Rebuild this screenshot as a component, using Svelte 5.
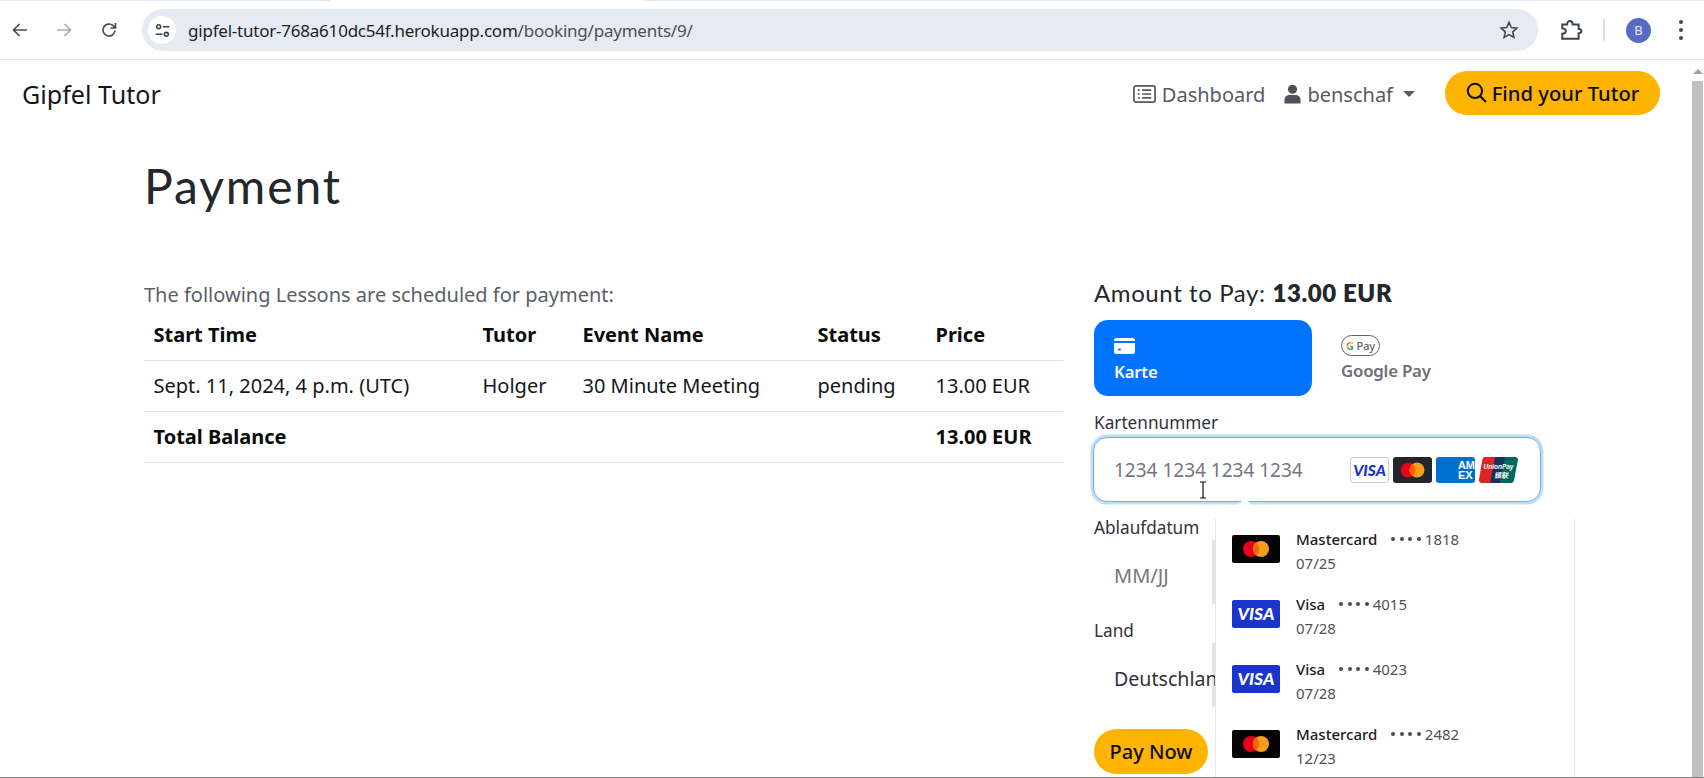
<script lang="ts">
  const columns = ['Start Time', 'Tutor', 'Event Name', 'Status', 'Price'];
  const lessons = [
    { start: 'Sept. 11, 2024, 4 p.m. (UTC)', tutor: 'Holger', event: '30 Minute Meeting', status: 'pending', price: '13.00 EUR' },
  ];

  const savedCards = [
    { brand: 'Mastercard', last4: '1818', expiry: '07/25' },
    { brand: 'Visa', last4: '4015', expiry: '07/28' },
    { brand: 'Visa', last4: '4023', expiry: '07/28' },
    { brand: 'Mastercard', last4: '2482', expiry: '12/23' },
  ];
</script>

<div class="window">
  <header class="chrome">
    <div class="tabstrip"></div>
    <div class="toolbar">
      <svg class="tool back" viewBox="0 0 20 20"><path d="M17 10H4M9.500 4 3.500 10l6 6" /></svg>
      <svg class="tool forward" viewBox="0 0 20 20"><path d="M3 10h13M10.500 4l6 6-6 6" /></svg>
      <svg class="tool reload" viewBox="0 0 20 20"><path d="M16 10.500A6 6 0 1 1 14 5.500L16 7.500M16.500 3v5h-5" /></svg>
      <div class="omnibox">
        <span class="site-chip">
          <svg viewBox="0 0 20 20"><circle cx="5.500" cy="5.500" r="2.300" /><path d="M10.500 5.500H18M2 14.500h8" /><circle cx="14.500" cy="14.500" r="2.300" /></svg>
        </span>
        <span class="url">gipfel-tutor-768a610dc54f.herokuapp.com<span class="path">/booking/payments/9/</span></span>
        <svg class="star" viewBox="0 0 20 20"><path d="m10 2.300 2.300 5.200 5.600.6-4.200 3.800 1.200 5.600-4.900-2.900-4.900 2.900 1.200-5.600L2.100 8.100l5.600-.6z" /></svg>
      </div>
      <svg class="puzzle" viewBox="0 0 22 22"><path d="M3 19V14.500c2.300 0 3.200-1.200 3.200-2.500S5.300 9.500 3 9.500V6h4.500c0-2 1-3.200 2.500-3.200S12.500 4 12.500 6H18v4c2 0 2.500 1 2.500 2s-.5 2-2.500 2v5z" /></svg>
      <span class="divider"></span>
      <span class="avatar">B</span>
      <span class="kebab"><i></i><i></i><i></i></span>
    </div>
  </header>

  <div class="viewport">
    <div class="page">
      <nav class="navbar">
        <a class="brand" href="#top">Gipfel Tutor</a>
        <div class="nav-links">
          <a class="nav-link dashboard" href="#top">
            <svg viewBox="0 0 24 20"><rect x="1" y="1.500" width="22" height="17" rx="2" /><path d="M5 6h2M5 10h2M5 14h2M9.500 6H19M9.500 10H19M9.500 14H19" /></svg>
            Dashboard
          </a>
          <a class="nav-link user" href="#top">
            <svg viewBox="0 0 18 20"><circle cx="9" cy="5" r="4.800" /><path d="M0.500 20v-3.500C.5 13 3 11 6 11h6c3 0 5.500 2 5.500 5.500V20z" /></svg>
            benschaf
            <span class="caret"></span>
          </a>
          <a class="find-btn" href="#top">
            <svg viewBox="0 0 20 20"><circle cx="8.500" cy="8.500" r="6.800" /><path d="m13.500 13.500 5.500 5.500" /></svg>
            Find your Tutor
          </a>
        </div>
      </nav>

      <main class="content">
        <h1>Payment</h1>
        <div class="columns">
          <section class="lessons">
            <p class="intro">The following Lessons are scheduled for payment:</p>
            <table>
              <thead>
                <tr>
                  {#each columns as col}
                    <th>{col}</th>
                  {/each}
                </tr>
              </thead>
              <tbody>
                {#each lessons as lesson}
                  <tr>
                    <td>{lesson.start}</td>
                    <td>{lesson.tutor}</td>
                    <td>{lesson.event}</td>
                    <td>{lesson.status}</td>
                    <td>{lesson.price}</td>
                  </tr>
                {/each}
                <tr class="total">
                  <td colspan="4">Total Balance</td>
                  <td>13.00 EUR</td>
                </tr>
              </tbody>
            </table>
          </section>

          <section class="checkout">
            <h2>Amount to Pay: <strong>13.00 EUR</strong></h2>
            <div class="tabs">
              <div class="tab active">
                <svg viewBox="0 0 21 16"><path d="M2.500 0h16A2.500 2.500 0 0 1 21 2.500V3H0v-.5A2.500 2.500 0 0 1 2.500 0zM0 5h21v8.500a2.500 2.500 0 0 1-2.500 2.500h-16A2.500 2.500 0 0 1 0 13.500z" /><rect x="4" y="10.500" width="3" height="2" rx="1" fill="#0074ff" /></svg>
                <span>Karte</span>
              </div>
              <div class="tab gpay">
                <span class="gpay-badge"><span class="g">G</span> Pay</span>
                <span>Google Pay</span>
              </div>
            </div>

            <div class="field-label">Kartennummer</div>
            <div class="input focused">
              <span class="placeholder">1234 1234 1234 1234</span>
              <span class="brands">
                <span class="brand-visa">VISA</span>
                <svg class="brand-mc" viewBox="0 0 39 26"><rect width="39" height="26" rx="3" fill="#22252b" /><circle cx="15" cy="13" r="7.500" fill="#eb001b" /><circle cx="24" cy="13" r="7.500" fill="#f79e1b" /><path d="M19.500 7a7.500 7.500 0 0 1 0 12 7.500 7.500 0 0 1 0-12z" fill="#ff5f00" /></svg>
                <span class="brand-amex"><span>AM<br />EX</span></span>
                <svg class="brand-union" viewBox="0 0 39 26">
                  <path d="M6 0h12L13 26H3a3 3 0 0 1-3-3.500L3.500 2A3 3 0 0 1 6 0z" fill="#dd2423" />
                  <path d="M16 0h12l-5 26H11z" fill="#16315e" />
                  <path d="M26 0h10.500a2.500 2.500 0 0 1 2.400 3L35 23.500A3 3 0 0 1 32 26H21z" fill="#00695f" />
                  <text x="19.500" y="12" text-anchor="middle">UnionPay</text>
                  <text x="22" y="21" text-anchor="middle">银联</text>
                </svg>
              </span>
              <svg class="ibeam" viewBox="0 0 8 18"><path d="M1 1h6M4 1v16M1 17h6" /></svg>
              <span class="notch"></span>
            </div>

            <div class="field-label">Ablaufdatum</div>
            <div class="input short"><span class="placeholder wide">MM/JJ</span></div>

            <div class="field-label">Land</div>
            <div class="input short"><span class="value">Deutschland</span></div>

            <button class="pay-btn">Pay Now</button>

            <div class="saved-cards">
              {#each savedCards as card}
                <div class="saved-card">
                  {#if card.brand === 'Visa'}
                    <span class="card-art visa">VISA</span>
                  {:else}
                    <svg class="card-art" viewBox="0 0 48 28"><rect width="48" height="28" rx="2" fill="#050505" /><circle cx="19" cy="14" r="8" fill="#eb001b" /><circle cx="29" cy="14" r="8" fill="#f79e1b" /><path d="M24 7.600a8 8 0 0 1 0 12.800 8 8 0 0 1 0-12.800z" fill="#f26a10" /></svg>
                  {/if}
                  <div class="card-info">
                    <div class="card-line">
                      <span class="card-brand">{card.brand}</span>
                      <span class="dots"><i></i><i></i><i></i><i></i></span>
                      <span class="last4">{card.last4}</span>
                    </div>
                    <div class="expiry">{card.expiry}</div>
                  </div>
                </div>
              {/each}
            </div>
          </section>
        </div>
      </main>
    </div>

    <aside class="scrollbar">
      <span class="arrow"></span>
      <span class="thumb"></span>
    </aside>
  </div>
  <div class="bottom-edge"></div>
</div>

<style>
  :global(body) {
    margin: 0;
    background: #fff;
    overflow: hidden;
  }

  .window {
    height: 778px;
    display: flex;
    flex-direction: column;
    overflow: hidden;
    font-family: 'Noto Sans', 'Open Sans', sans-serif;
    color: #111;
  }

  .chrome {
    flex-shrink: 0;
    height: 60px;
    box-sizing: border-box;
    border-bottom: 1px solid #e2e4e8;
    background: #fff;
  }

  .tabstrip {
    height: 1px;
    background: linear-gradient(90deg, #dfeaf6 0 330px, #fff 330px 645px, #dfeaf6 645px);
  }

  .toolbar {
    height: 42px;
    margin-top: 8px;
    display: flex;
    align-items: center;
  }

  .tool {
    width: 20px;
    height: 20px;
    fill: none;
    stroke: #474c54;
    stroke-width: 1.700;
    flex-shrink: 0;
  }

  .back { margin-left: 10px; }
  .forward { margin-left: 24px; stroke: #a9adb3; }
  .reload { margin-left: 25px; }

  .omnibox {
    margin-left: 23px;
    width: 1396px;
    height: 42px;
    border-radius: 21px;
    background: #e6eaf3;
    display: flex;
    align-items: center;
    flex-shrink: 0;
  }

  .site-chip {
    width: 28px;
    height: 28px;
    margin-left: 6px;
    border-radius: 50%;
    background: #fff;
    display: flex;
    align-items: center;
    justify-content: center;
  }

  .site-chip svg {
    width: 17px;
    height: 17px;
    fill: none;
    stroke: #3c4047;
    stroke-width: 1.800;
  }

  .url {
    margin-left: 12px;
    font-size: 17px;
    letter-spacing: -0.220px;
    color: #1c1f24;
    flex: 1;
    white-space: nowrap;
  }

  .path { color: #4c5158; }

  .star {
    width: 20px;
    height: 20px;
    margin-right: 19px;
    fill: none;
    stroke: #454a52;
    stroke-width: 1.600;
  }

  .puzzle {
    width: 24px;
    height: 24px;
    margin-left: 21px;
    fill: none;
    stroke: #3b4552;
    stroke-width: 1.800;
    flex-shrink: 0;
  }

  .divider {
    width: 2px;
    height: 22px;
    margin-left: 20px;
    background: #d3e0ec;
  }

  .avatar {
    width: 25px;
    height: 25px;
    margin-left: 21px;
    border-radius: 50%;
    background: #5a6bc6;
    color: #e8ebff;
    font-size: 13px;
    display: flex;
    align-items: center;
    justify-content: center;
  }

  .kebab {
    margin-left: 28px;
    display: flex;
    flex-direction: column;
    gap: 4px;
  }

  .kebab i {
    width: 4px;
    height: 4px;
    border-radius: 50%;
    background: #43484f;
  }

  .viewport {
    flex: 1;
    min-height: 0;
    display: flex;
  }

  .page {
    flex: 1;
    min-width: 0;
    overflow: hidden;
  }

  .navbar {
    height: 70px;
    display: flex;
    align-items: center;
    justify-content: space-between;
    padding: 0 32px 0 22px;
  }

  .brand {
    font-size: 25.100px;
    color: #14171a;
    text-decoration: none;
    margin-top: -2px;
  }

  .nav-links {
    display: flex;
    align-items: center;
  }

  .nav-link {
    display: flex;
    align-items: center;
    font-size: 20px;
    color: #555b62;
    text-decoration: none;
    margin-top: -2px;
  }

  .dashboard svg {
    width: 23px;
    height: 20px;
    margin-right: 6px;
    fill: none;
    stroke: #555b62;
    stroke-width: 1.800;
  }

  .user {
    margin-left: 19px;
  }

  .user svg {
    width: 17px;
    height: 20px;
    margin-right: 6px;
    fill: #4d5258;
  }

  .caret {
    width: 0;
    height: 0;
    margin-left: 10px;
    border-left: 6px solid transparent;
    border-right: 6px solid transparent;
    border-top: 6px solid #555b62;
  }

  .find-btn {
    margin: -5px 0 0 30px;
    height: 44px;
    width: 215px;
    box-sizing: border-box;
    border-radius: 22px;
    background: #ffb500;
    display: flex;
    align-items: center;
    justify-content: center;
    gap: 5px;
    color: #0c0c0c;
    font-size: 20.200px;
    font-weight: 500;
    text-decoration: none;
  }

  .find-btn svg {
    width: 21px;
    height: 21px;
    fill: none;
    stroke: #0c0c0c;
    stroke-width: 2;
  }

  .content {
    padding: 28px 0 0 144px;
    position: relative;
  }

  h1 {
    margin: 0;
    font-family: Lato, sans-serif;
    font-weight: 400;
    font-size: 48px;
    line-height: 56px;
    letter-spacing: 1.900px;
    color: #24272b;
  }

  .columns {
    margin-top: 52px;
    display: flex;
    gap: 30px;
  }

  .lessons {
    width: 920px;
    flex-shrink: 0;
  }

  .intro {
    margin: 16px 0 0;
    font-size: 20px;
    line-height: 26px;
    color: #5a5f66;
  }

  table {
    width: 100%;
    margin-top: 1px;
    border-collapse: collapse;
    table-layout: fixed;
    font-size: 20px;
    color: #14171a;
  }

  th, td {
    padding: 0 0 0 9.500px;
    height: 51px;
    box-sizing: border-box;
    text-align: left;
    border-bottom: 1px solid #d9e5f0;
    white-space: nowrap;
  }

  th {
    font-weight: 700;
    color: #0b0b0b;
  }

  th:nth-child(1) { width: 329px; }
  th:nth-child(2) { width: 100px; }
  th:nth-child(3) { width: 235px; }
  th:nth-child(4) { width: 118px; }

  .total td {
    font-weight: 700;
    color: #0b0b0b;
  }

  .checkout {
    width: 448px;
    position: relative;
    flex-shrink: 0;
    margin-left: -1px;
  }

  h2 {
    margin: 11px 0 0 1px;
    font-family: Lato, sans-serif;
    font-weight: 400;
    font-size: 24px;
    line-height: 32px;
    letter-spacing: 0.600px;
    color: #24272b;
    white-space: nowrap;
  }

  h2 strong {
    font-weight: 800;
  }

  .tabs {
    margin: 11px 0 0 1px;
    display: flex;
  }

  .tab {
    height: 76px;
    width: 218px;
    box-sizing: border-box;
    padding: 16px 20px 0;
    border-radius: 14px;
    display: flex;
    flex-direction: column;
    font-size: 16.800px;
    line-height: 22px;
    font-weight: 600;
    letter-spacing: -0.200px;
  }

  .active {
    background: #0074ff;
    color: #fff;
  }

  .active svg {
    width: 21px;
    height: 16px;
    fill: #fff;
    margin: 2px 0 7px;
  }

  .gpay {
    color: #6d6e78;
    padding: 15px 29px 0;
  }

  .gpay-badge {
    width: 39px;
    height: 21px;
    box-sizing: border-box;
    border: 1px solid #5f6368;
    border-radius: 11px;
    margin-bottom: 4px;
    font-size: 11px;
    line-height: 19px;
    font-weight: 500;
    text-align: center;
    letter-spacing: -0.100px;
    color: #5f6368;
  }

  .g {
    font-weight: 700;
    background: linear-gradient(135deg, #ea4335 0 35%, #fbbc05 35% 50%, #34a853 50% 70%, #4285f4 70%);
    -webkit-background-clip: text;
    background-clip: text;
    color: transparent;
  }

  .field-label {
    margin: 15px 0 0 1px;
    font-size: 17.200px;
    line-height: 23px;
    color: #30313d;
  }

  .input {
    height: 64px;
    margin-top: 2px;
    box-sizing: border-box;
    display: flex;
    align-items: center;
    padding-left: 20px;
    font-size: 19px;
    position: relative;
  }

  .focused {
    width: 448px;
    height: 65px;
    margin: 3px 0 -1px 0;
    border: 1.500px solid #6fb0f2;
    border-radius: 14px;
    box-shadow: 0 0 0 2.500px #c3ddf9;
    background: #fff;
  }

  .short {
    width: 122px;
    margin: 1px 0 0 1px;
    padding: 6px 0 0 20px;
    white-space: nowrap;
    border-right: 4px solid #e3e3e8;
  }

  .placeholder { color: #75767f; }
  .wide { font-size: 20px; }
  .value { color: #30313d; font-size: 19.600px; }

  .brands {
    margin-left: auto;
    margin-right: 22px;
    display: flex;
    gap: 4px;
  }

  .brands > * {
    width: 39px;
    height: 26px;
    box-sizing: border-box;
  }

  .brand-visa {
    border: 1px solid #c9ccd2;
    border-radius: 3px;
    background: #fff;
    color: #1434cb;
    font: italic 900 15.500px/24px Lato, sans-serif;
    text-align: center;
  }

  .brand-amex {
    background: #016fd0;
    border-radius: 3px;
    color: #fff;
    font: 800 11px/10px 'Liberation Sans', sans-serif;
    display: flex;
    align-items: center;
    justify-content: flex-end;
    overflow: hidden;
  }

  .brand-union text {
    fill: #fff;
    font: italic 700 6.500px 'Liberation Sans', 'Noto Sans CJK SC', sans-serif;
  }

  .brand-union text + text {
    font-size: 7px;
  }

  .ibeam {
    position: absolute;
    left: 105px;
    top: 43px;
    width: 8px;
    height: 18px;
    fill: none;
    stroke: #111;
    stroke-width: 1.200;
  }

  .notch {
    position: absolute;
    left: 146px;
    bottom: -8px;
    width: 9px;
    height: 9px;
    background: #fff;
    transform: rotate(45deg);
  }

  .pay-btn {
    display: block;
    margin: 22px 0 0 1px;
    width: 114px;
    height: 45px;
    border: none;
    border-radius: 23px;
    background: #ffb500;
    color: #0c0c0c;
    font-family: inherit;
    font-size: 20px;
    font-weight: 500;
    padding: 0;
  }

  .saved-cards {
    position: absolute;
    left: 122px;
    top: 253px;
    width: 360px;
    height: 258px;
    box-sizing: border-box;
    padding: 0 0 0 16px;
    background: #fff;
    border-left: 1px solid #e5e6ea;
    border-right: 1px solid #e5e6ea;
    overflow: hidden;
  }

  .saved-card {
    height: 65px;
    display: flex;
    box-sizing: border-box;
    padding-top: 16px;
    gap: 16px;
  }

  .card-art {
    width: 48px;
    height: 28px;
    flex-shrink: 0;
  }

  .visa {
    background: #1a35cc;
    border-radius: 2px;
    color: #fff;
    font: italic 900 17.500px/28px Lato, sans-serif;
    text-align: center;
  }

  .card-info {
    margin-top: -9px;
  }

  .card-line {
    display: flex;
    align-items: center;
    height: 25px;
    font-size: 15px;
  }

  .card-brand {
    color: #1a1b25;
    font-weight: 500;
  }

  .dots {
    display: flex;
    gap: 4.500px;
    margin: 0 4px 0 14px;
  }

  .dots i {
    width: 4px;
    height: 4px;
    border-radius: 50%;
    background: #4a4c55;
  }

  .last4, .expiry {
    color: #4f5159;
    font-size: 15px;
  }

  .expiry {
    height: 24px;
    line-height: 24px;
  }

  .scrollbar {
    width: 12px;
    flex-shrink: 0;
    display: flex;
    flex-direction: column;
    align-items: center;
  }

  .arrow {
    width: 0;
    height: 0;
    margin-top: 9px;
    border-left: 5px solid transparent;
    border-right: 5px solid transparent;
    border-bottom: 5px solid #a3a3a3;
  }

  .thumb {
    width: 11px;
    margin-top: 7px;
    margin-right: 1px;
    flex: 1;
    background: #c1c1c1;
  }

  .bottom-edge {
    height: 1px;
    flex-shrink: 0;
    background: #808080;
  }
</style>
